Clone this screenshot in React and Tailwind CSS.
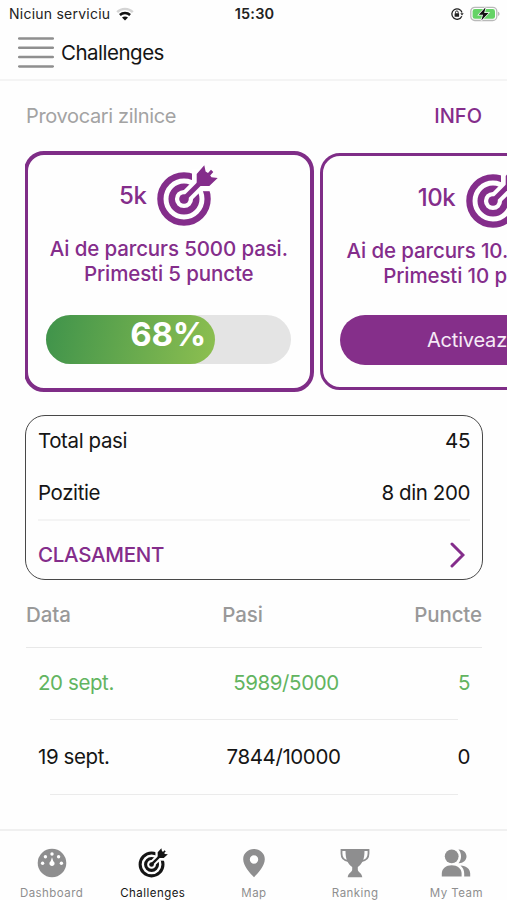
import clsx from 'clsx'

const HISTORY = [
  { date: '20 sept.', steps: '5989/5000', points: 5, done: true },
  { date: '19 sept.', steps: '7844/10000', points: 0, done: false },
]

const TABS = [
  { label: 'Dashboard', icon: GaugeIcon },
  { label: 'Challenges', icon: TargetIcon, active: true },
  { label: 'Map', icon: PinIcon },
  { label: 'Ranking', icon: TrophyIcon },
  { label: 'My Team', icon: TeamIcon },
]

// Origin of the viewBox is the bullseye, the arrow sticks out to the top right.
function TargetIcon({ className }) {
  return (
    <svg viewBox="-28 -34 62 62" className={className} fill="none" stroke="currentColor">
      <circle r="23.6" strokeWidth="6.3" />
      <circle r="12.3" strokeWidth="6.4" />
      <path d="M8 -7.8V-30H30V-7.8Z" fill="#fff" stroke="none" />
      <path d="M4 -4L16 -16" stroke="#fff" strokeWidth="13" />
      <circle r="4.8" fill="currentColor" stroke="none" />
      <path d="M0 0L19 -19" strokeWidth="5" />
      <path
        d="M12.7 -15.5V-25L20.3 -33.7L21.6 -27.5L24 -26L27 -29.3L29.3 -27L26.2 -23.6L27.5 -21.7L33.7 -21L25.3 -13.1H15Z"
        fill="currentColor"
        stroke="none"
      />
    </svg>
  )
}

function GaugeIcon({ className }) {
  return (
    <svg viewBox="0 0 30 30" className={className}>
      <circle cx="15" cy="15" r="14.3" fill="currentColor" />
      <g fill="#fff">
        <circle cx="5.6" cy="15.2" r="1.7" />
        <circle cx="8.4" cy="8.8" r="1.7" />
        <circle cx="15" cy="6" r="1.7" />
        <circle cx="21.6" cy="8.8" r="1.7" />
        <circle cx="24.4" cy="15.2" r="1.7" />
        <path d="M15 9.3L16.3 13.2A2.6 2.6 0 1 1 13.7 13.2Z" />
      </g>
    </svg>
  )
}

function PinIcon({ className }) {
  return (
    <svg viewBox="0 0 30 30" className={className}>
      <path
        fill="currentColor"
        fillRule="evenodd"
        d="M15 1C9 1 4.200 5.300 4.200 11.200C4.200 18 11 25 15 29.300C19 25 25.800 18 25.800 11.200C25.800 5.300 21 1 15 1ZM15 7.300A4.200 4.200 0 1 1 15 15.700A4.200 4.200 0 0 1 15 7.300Z"
      />
    </svg>
  )
}

function TrophyIcon({ className }) {
  return (
    <svg viewBox="0 0 30 30" className={className}>
      <path
        d="M7 2H1.500V5.500C1.500 9.500 4 12.600 8.500 13M23 2H28.500V5.500C28.500 9.500 26 12.600 21.500 13"
        fill="none"
        stroke="currentColor"
        strokeWidth="1.800"
      />
      <path
        fill="currentColor"
        d="M5.500 1H24.500V3C24.500 11 22.500 15.500 17.800 19V21.500C17.800 24 21.800 25 22.300 29.300H7.700C8.200 25 12.200 24 12.200 21.500V19C7.500 15.500 5.500 11 5.500 3Z"
      />
    </svg>
  )
}

function TeamIcon({ className }) {
  return (
    <svg viewBox="0 0 30 30" className={className} fill="currentColor">
      <circle cx="10.7" cy="8.300" r="6.900" />
      <path d="M.8 28.600V25.500C.8 20.500 5.200 17.300 10.700 17.300S20.600 20.500 20.600 25.500V28.600Z" />
      <path d="M17.500 1.400C22 1.200 25.500 4.200 25.500 8.300S22 15.400 17.500 15.200C20.900 11.300 20.900 5.300 17.500 1.400Z" />
      <path d="M19.500 17.500C25.300 18 29.200 21 29.200 25.500V28.600H23.200V25.500C23.200 22.300 21.900 19.500 19.500 17.500Z" />
    </svg>
  )
}

function StatusBar() {
  return (
    <div className="grid h-[27px] shrink-0 grid-cols-3 items-center pl-[9px] pr-[7px] text-[14.500px] text-[#222]">
      <div className="flex items-center gap-[6px] whitespace-nowrap">
        <span className="text-[14px] tracking-[0.24px]">Niciun serviciu</span>
        <svg viewBox="0 0 18 14" className="h-[14px] w-[18px]" fill="none">
          <path d="M1.200 5.200C5.500 .8 12.500 .8 16.800 5.200" stroke="#d4d4d4" strokeWidth="2.400" />
          <path d="M3.900 8C6.800 5.200 11.200 5.200 14.100 8" stroke="#111" strokeWidth="2.500" />
          <path d="M9 13.500L6 10.500C7.700 9 10.300 9 12 10.500Z" fill="#111" />
        </svg>
      </div>
      <span className="text-center font-semibold tracking-[0.2px]">15:30</span>
      <div className="flex items-center justify-end gap-[6px]">
        <svg viewBox="0 0 14 14" className="size-[14px]" fill="none" stroke="#222">
          <path d="M11.800 9.200A5.200 5.200 0 1 1 12 5.500" strokeWidth="1.300" />
          <path d="M10.300 6.200H13.700L12 8.600Z" fill="#222" stroke="none" />
          <rect x="4.600" y="6.200" width="4.500" height="3.500" rx=".5" fill="#222" stroke="none" />
          <path d="M5.500 6.500V5.300A1.350 1.350 0 0 1 8.200 5.300V6.500" strokeWidth="1" />
        </svg>
        <svg viewBox="0 0 30 16" className="h-[16px] w-[30px]">
          <rect x=".8" y="1.300" width="26" height="13.200" rx="4" fill="#fff" stroke="#b9b9b9" strokeWidth="1.300" />
          <rect x="2.600" y="3.100" width="22.400" height="9.600" rx="2.300" fill="#65d366" />
          <path d="M28 5.800C30 6.400 30 9.400 28 10Z" fill="#b9b9b9" />
          <path
            d="M15.600 1.200L8.800 8.800H13L11.300 14.600L18.500 7H14.200Z"
            fill="#111"
            stroke="#fff"
            strokeWidth="1.400"
            paintOrder="stroke"
          />
        </svg>
      </div>
    </div>
  )
}

function Header() {
  return (
    <header className="flex h-[54px] shrink-0 items-center gap-[7px] border-b-2 border-[#f4f4f4] pl-[18px]">
      <svg viewBox="0 0 36 31" className="-mt-px h-[31px] w-[36px]" stroke="#8f8f8f" strokeWidth="2.500" strokeLinecap="round">
        <path d="M1.200 1.500H34.800M1.200 10.800H34.800M1.200 20.100H34.800M1.200 29.400H34.800" />
      </svg>
      <h1 className="pt-px text-[20.500px] tracking-[-0.5px] text-[#151515]">Challenges</h1>
    </header>
  )
}

function ChallengeCard({ title, steps, points, className, children }) {
  return (
    <article className={clsx('flex shrink-0 flex-col rounded-[20px] border-[#7f2d87] text-[#842d8b]', className)}>
      <div className="flex items-center justify-center">
        <span className="text-[24px] font-medium tracking-[-0.4px]">{title}</span>
        <TargetIcon className="ml-[10px] size-[62px]" />
      </div>
      <p className="mt-[9px] whitespace-nowrap text-center text-[20.500px] font-medium leading-[25px] tracking-[-0.120px]">
        Ai de parcurs {steps} pasi.
        <br />
        Primesti {points} puncte
      </p>
      {children}
    </article>
  )
}

function ProgressBar({ percent }) {
  return (
    <div className="relative ml-[18px] mr-[19px] mt-[29px] h-[49px] rounded-full bg-[#e4e4e4]">
      <div
        className="h-full rounded-full bg-linear-[100deg,#3f934b,#8dbf50]"
        style={{ width: `${percent + 1}%` }}
      />
      <span className="absolute inset-x-0 -top-[3px] text-center text-[33px] font-bold leading-[44px] tracking-[-0.200px] text-white">
        {percent}%
      </span>
    </div>
  )
}

function Summary() {
  return (
    <section className="ml-[25px] mr-[24px] mt-[22px] flex h-[165px] shrink-0 flex-col rounded-[20px] border-[1.500px] border-[#484848] px-[12px] text-[20.500px] tracking-[-0.4px] text-[#151515]">
      <div className="flex h-[51px] items-center justify-between">
        <span>Total pasi</span>
        <span>45</span>
      </div>
      <div className="flex h-[54px] items-center justify-between border-b-2 border-[#f4f4f4] pt-px">
        <span>Pozitie</span>
        <span>8 din 200</span>
      </div>
      <div className="flex flex-1 items-center justify-between pr-[5px] pt-[10px] font-medium tracking-[-0.300px] text-[#842d8b]">
        <span>CLASAMENT</span>
        <svg viewBox="0 0 15 26" className="h-[26px] w-[15px]" fill="none">
          <path d="M2 2L13 13L2 24" stroke="currentColor" strokeWidth="3" strokeLinecap="round" />
        </svg>
      </div>
    </section>
  )
}

function History() {
  return (
    <section className="ml-[26px] mr-[25px] text-[20.500px] tracking-[-0.4px]">
      <div className="flex h-[68px] items-center justify-between border-b border-[#e8e8e8] pt-[3px] font-medium tracking-[-0.100px] text-[#999]">
        <span>Data</span>
        <span>Pasi</span>
        <span>Puncte</span>
      </div>
      {HISTORY.map((row) => (
        <div key={row.date} className="flex h-[72px] flex-col last:h-[75px]">
          <div
            className={clsx(
              'flex flex-1 items-center justify-between px-[12px]',
              row.done ? 'text-[#62b460]' : 'text-[#151515]',
            )}
          >
            <span>{row.date}</span>
            <span>{row.steps}</span>
            <span>{row.points}</span>
          </div>
          <div className="mx-[24px] h-px bg-[#ebebeb]" />
        </div>
      ))}
    </section>
  )
}

function TabBar() {
  return (
    <nav className="mt-auto grid h-[71px] shrink-0 grid-cols-5 border-t-2 border-[#f0f0f0] pl-px">
      {TABS.map(({ label, icon: Icon, active }) => (
        <div
          key={label}
          className={clsx(
            'flex flex-col items-center pt-[17px] text-[11.500px] leading-[18px] tracking-[0.45px]',
            active ? 'text-[#151515]' : 'text-[#8e8e8f]',
          )}
        >
          <Icon className="size-[30px]" />
          <span className="mt-[6px]">{label}</span>
        </div>
      ))}
    </nav>
  )
}

export default function App() {
  return (
    <div className="flex h-[900px] w-[507px] flex-col overflow-hidden bg-[#fefefe] font-[Inter,sans-serif]">
      <StatusBar />
      <Header />
      <div className="flex h-[70px] shrink-0 items-center justify-between pl-[26px] pr-[25px] text-[20px]">
        <h2 className="tracking-[-0.35px] text-[#a3a3a3]">Provocari zilnice</h2>
        <span className="font-medium text-[#842d8b]">INFO</span>
      </div>
      <div className="ml-[25px] flex h-[242px] shrink-0 items-start gap-[6px] overflow-hidden">
        <ChallengeCard
          title="5k"
          steps="5000"
          points={5}
          className="-ml-[1.500px] h-[241px] w-[290.500px] border-4 pt-[10px]"
        >
          <ProgressBar percent={68} />
        </ChallengeCard>
        <ChallengeCard
          title="10k"
          steps="10.000"
          points={10}
          className="mt-[1.500px] h-[237px] w-[305px] border-[3.500px] pt-[11px]"
        >
          <button className="mx-[17px] mt-[27px] h-[50px] rounded-full bg-[#852f8a] text-[20px] tracking-[-0.2px] text-[#f6eaf7]">
            Activeaza
          </button>
        </ChallengeCard>
      </div>
      <Summary />
      <History />
      <TabBar />
    </div>
  )
}
